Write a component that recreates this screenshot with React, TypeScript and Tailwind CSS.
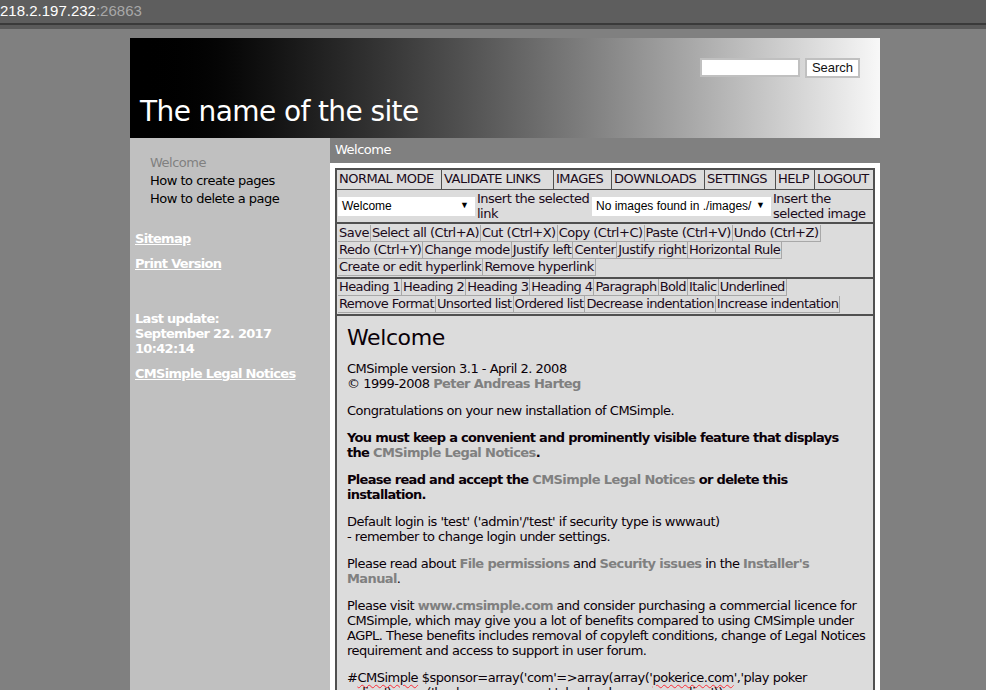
const font = "font-['Verdana','DejaVu_Sans',sans-serif]";

const topMenu = [
  { label: "NORMAL MODE", w: "w-[105px]" },
  { label: "VALIDATE LINKS", w: "w-[112px]" },
  { label: "IMAGES", w: "w-[58px]" },
  { label: "DOWNLOADS", w: "w-[93px]" },
  { label: "SETTINGS", w: "w-[71px]" },
  { label: "HELP", w: "w-[39px]" },
  { label: "LOGOUT", w: "flex-1" },
];

const editRows = [
  ["Save", "Select all (Ctrl+A)", "Cut (Ctrl+X)", "Copy (Ctrl+C)", "Paste (Ctrl+V)", "Undo (Ctrl+Z)"],
  ["Redo (Ctrl+Y)", "Change mode", "Justify left", "Center", "Justify right", "Horizontal Rule"],
  ["Create or edit hyperlink", "Remove hyperlink"],
];

const formatRows = [
  ["Heading 1", "Heading 2", "Heading 3", "Heading 4", "Paragraph", "Bold", "Italic", "Underlined"],
  ["Remove Format", "Unsorted list", "Ordered list", "Decrease indentation", "Increase indentation"],
];

function ToolButton({ label, tight }: { label: string; tight?: boolean }) {
  return (
    <span
      className={`h-[17px] border border-t-0 border-l-0 border-[#a8a8a8] bg-[#dcdcdc] leading-[16px] whitespace-nowrap ${
        tight ? "px-[1px] tracking-[-0.6px]" : "px-[1px]"
      }`}
    >
      {label}
    </span>
  );
}

function FakeSelect({ value, w }: { value: string; w: string }) {
  return (
    <div
      className={`${w} flex h-[19px] shrink-0 items-center justify-between whitespace-nowrap bg-white pl-[4px] pr-[6px] text-[12px] tracking-normal font-['Liberation_Sans',sans-serif] text-black`}
    >
      <span>{value}</span>
      <span className="text-[9px]">▼</span>
    </div>
  );
}

const Link = ({ children }: { children: string }) => (
  <span className="font-bold tracking-[-0.6px] text-[#808080]">{children}</span>
);

const Typo = ({ children }: { children: string }) => (
  <span className="underline decoration-wavy decoration-red-500 decoration-1 underline-offset-2">{children}</span>
);

export default function App() {
  return (
    <div className={`min-h-screen bg-[#808080] text-[13px] tracking-[-0.5px] ${font}`}>
      <div className="flex h-[23px] items-center bg-[#5e5e5e] font-['Liberation_Sans',sans-serif] text-[15px] tracking-normal">
        <span className="text-white">218.2.197.232</span>
        <span className="text-[#a8a8a8]">:26863</span>
      </div>
      <div className="h-[2px] bg-[#3a3a3a]" />
      <div className="h-[4px] bg-[#5a5a5a]" />

      <div className="ml-[130px] mt-[9px] w-[750px]">
        <header className="relative h-[100px] bg-gradient-to-r from-black to-[#f8f8f8]">
          <div className="absolute right-[20px] top-[20px] flex gap-[5px] font-['Liberation_Sans',sans-serif] tracking-normal">
            <div className="h-[19px] w-[100px] border-2 border-[#c0c0c0] bg-white" />
            <div className="flex h-[20px] w-[55px] items-center justify-center border-2 border-[#c0c0c0] bg-white text-[13px] text-[#111]">
              Search
            </div>
          </div>
          <h1 className="absolute left-[10px] top-[56px] text-[28px] leading-[36px] tracking-[-0.6px] text-white">
            The name of the site
          </h1>
        </header>

        <div className="flex">
          <aside className="min-h-[560px] w-[200px] shrink-0 bg-[#c0c0c0] pl-[5px] pt-[16px] text-white">
            <ul className="pl-[15px] leading-[18px]">
              <li className="text-[#808080]">Welcome</li>
              <li className="text-black">How to create pages</li>
              <li className="text-black">How to delete a page</li>
            </ul>
            <p className="mt-[21px] font-bold tracking-[-0.7px] underline">Sitemap</p>
            <p className="mt-[5px] font-bold tracking-[-0.7px] underline">Print Version</p>
            <p className="mt-[38px] font-bold leading-[15px] tracking-[-0.7px]">
              Last update:
              <br />
              September 22. 2017
              <br />
              10:42:14
            </p>
            <p className="mt-[8px] font-bold tracking-[-0.7px] underline">CMSimple Legal Notices</p>
          </aside>

          <main className="w-[550px] shrink-0">
            <div className="h-[25px] pl-[5px] pt-[4px] leading-[16px] text-white">Welcome</div>
            <div className="bg-white px-[5px] pt-[5px]">
              <div className="border-2 border-b-0 border-[#505050] bg-[#dcdcdc] text-[#1a0a1a]">
                <div className="flex h-[20px] border-b border-[#505050] leading-[18px]">
                  {topMenu.map((m) => (
                    <div key={m.label} className={`${m.w} shrink-0 border-r border-[#505050] pl-[2px] last:border-r-0`}>
                      {m.label}
                    </div>
                  ))}
                </div>
                <div className="flex h-[34px] items-center border-b-2 border-[#505050] pl-[1px]">
                  <FakeSelect value="Welcome" w="w-[137px]" />
                  <div className="w-[117px] shrink-0 pl-[2px] leading-[15px]">Insert the selected link</div>
                  <FakeSelect value="No images found in ./images/" w="w-[179px]" />
                  <div className="flex-1 pl-[2px] leading-[15px]">Insert the selected image</div>
                </div>
                <div className="flex flex-col border-b-2 border-[#505050] pb-[1px] pl-[1px] pt-[1px]">
                  {editRows.map((row, i) => (
                    <div key={i} className="flex">
                      {row.map((b) => (
                        <ToolButton key={b} label={b} />
                      ))}
                    </div>
                  ))}
                </div>
                <div className="flex flex-col pb-[1px] pl-[1px]">
                  {formatRows.map((row, i) => (
                    <div key={i} className="flex">
                      {row.map((b) => (
                        <ToolButton key={b} label={b} tight />
                      ))}
                    </div>
                  ))}
                </div>
              </div>
              <div className="h-[400px] overflow-hidden border-2 border-[#505050] bg-[#dcdcdc] pl-[10px] pr-[4px] pt-[8px] leading-[15px] whitespace-nowrap text-[#0a0008]">
                <h2 className="text-[22px] leading-[28px] tracking-[-0.4px]">Welcome</h2>
                <p className="mt-[9px]">
                  CMSimple version 3.1 - April 2. 2008
                  <br />© 1999-2008 <Link>Peter Andreas Harteg</Link>
                </p>
                <p className="mt-[12px]">Congratulations on your new installation of CMSimple.</p>
                <p className="mt-[12px] font-bold tracking-[-0.7px]">
                  You must keep a convenient and prominently visible feature that displays
                  <br />
                  the <Link>CMSimple Legal Notices</Link>.
                </p>
                <p className="mt-[12px] font-bold tracking-[-0.7px]">
                  Please read and accept the <Link>CMSimple Legal Notices</Link> or delete this
                  <br />
                  installation.
                </p>
                <p className="mt-[12px]">
                  Default login is 'test' ('admin'/'test' if security type is wwwaut)
                  <br />- remember to change login under settings.
                </p>
                <p className="mt-[12px]">
                  Please read about <Link>File permissions</Link> and <Link>Security issues</Link> in the{" "}
                  <Link>Installer's</Link>
                  <br />
                  <Link>Manual</Link>.
                </p>
                <p className="mt-[12px]">
                  Please visit <Link>www.cmsimple.com</Link> and consider purchasing a commercial licence for
                  <br />
                  CMSimple, which may give you a lot of benefits compared to using CMSimple under
                  <br />
                  AGPL. These benefits includes removal of copyleft conditions, change of Legal Notices
                  <br />
                  requirement and access to support in user forum.
                </p>
                <p className="mt-[12px]">
                  #<Typo>CMSimple</Typo> $sponsor=array('com'=&gt;array(array('<Typo>pokerice.com</Typo>','play poker
                  <br />
                  online'),array('backgammon.com','play backgammon online'))
                </p>
              </div>
            </div>
          </main>
        </div>
      </div>
    </div>
  );
}
